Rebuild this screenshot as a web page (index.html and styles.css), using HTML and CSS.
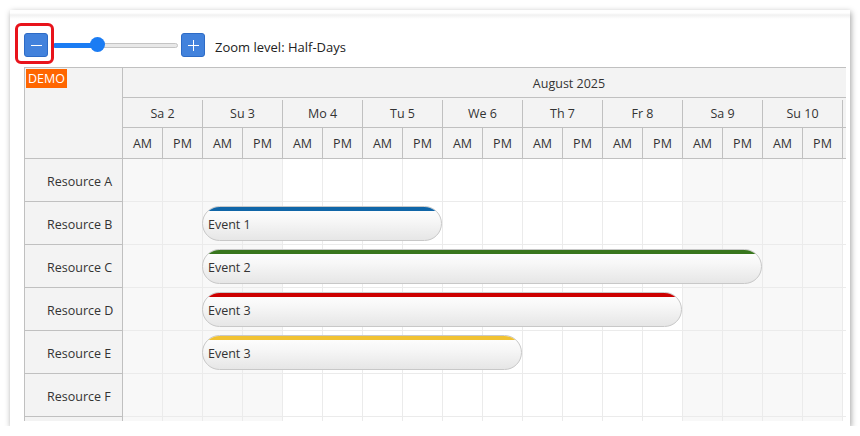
FILE: index.html
```html
<!DOCTYPE html>
<html>
<head>
<meta charset="utf-8">
<link rel="stylesheet" href="styles.css">
</head>
<body>
<div class="frame">
  <div class="toolbar">
    <button class="zbtn"><span class="minus"></span></button>
    <div class="slider"><div class="fill"></div><div class="thumb"></div></div>
    <button class="zbtn"><span class="plus"></span></button>
    <span class="zlabel">Zoom level: Half-Days</span>
  </div>
  <div class="highlight"></div>
  <div class="scheduler">
    <div class="head">
      <div class="corner"><span class="demo">DEMO</span></div>
      <div class="timehead">
        <div class="hrow month"><div class="hc m">August 2025</div></div>
        <div class="hrow days">
          <div class="hc d">Sa 2</div><div class="hc d">Su 3</div><div class="hc d">Mo 4</div><div class="hc d">Tu 5</div><div class="hc d">We 6</div><div class="hc d">Th 7</div><div class="hc d">Fr 8</div><div class="hc d">Sa 9</div><div class="hc d">Su 10</div><div class="hc d"></div>
        </div>
        <div class="hrow halves">
          <div class="hc h">AM</div><div class="hc h">PM</div><div class="hc h">AM</div><div class="hc h">PM</div><div class="hc h">AM</div><div class="hc h">PM</div><div class="hc h">AM</div><div class="hc h">PM</div><div class="hc h">AM</div><div class="hc h">PM</div><div class="hc h">AM</div><div class="hc h">PM</div><div class="hc h">AM</div><div class="hc h">PM</div><div class="hc h">AM</div><div class="hc h">PM</div><div class="hc h">AM</div><div class="hc h">PM</div><div class="hc h"></div><div class="hc h"></div>
        </div>
      </div>
    </div>

    <div class="row">
      <div class="rh">Resource A</div>
      <div class="lane">
        <div class="c w"></div><div class="c w"></div><div class="c w"></div><div class="c w"></div><div class="c"></div><div class="c"></div><div class="c"></div><div class="c"></div><div class="c"></div><div class="c"></div><div class="c"></div><div class="c"></div><div class="c"></div><div class="c"></div><div class="c w"></div><div class="c w"></div><div class="c w"></div><div class="c w"></div><div class="c"></div><div class="c"></div>
      </div>
    </div>
    <div class="row">
      <div class="rh">Resource B</div>
      <div class="lane">
        <div class="c w"></div><div class="c w"></div><div class="c w"></div><div class="c w"></div><div class="c"></div><div class="c"></div><div class="c"></div><div class="c"></div><div class="c"></div><div class="c"></div><div class="c"></div><div class="c"></div><div class="c"></div><div class="c"></div><div class="c w"></div><div class="c w"></div><div class="c w"></div><div class="c w"></div><div class="c"></div><div class="c"></div>
        <div class="ev blue" style="left:79px;width:240px"><span class="evt">Event 1</span></div>
      </div>
    </div>
    <div class="row">
      <div class="rh">Resource C</div>
      <div class="lane">
        <div class="c w"></div><div class="c w"></div><div class="c w"></div><div class="c w"></div><div class="c"></div><div class="c"></div><div class="c"></div><div class="c"></div><div class="c"></div><div class="c"></div><div class="c"></div><div class="c"></div><div class="c"></div><div class="c"></div><div class="c w"></div><div class="c w"></div><div class="c w"></div><div class="c w"></div><div class="c"></div><div class="c"></div>
        <div class="ev green" style="left:79px;width:560px"><span class="evt">Event 2</span></div>
      </div>
    </div>
    <div class="row">
      <div class="rh">Resource D</div>
      <div class="lane">
        <div class="c w"></div><div class="c w"></div><div class="c w"></div><div class="c w"></div><div class="c"></div><div class="c"></div><div class="c"></div><div class="c"></div><div class="c"></div><div class="c"></div><div class="c"></div><div class="c"></div><div class="c"></div><div class="c"></div><div class="c w"></div><div class="c w"></div><div class="c w"></div><div class="c w"></div><div class="c"></div><div class="c"></div>
        <div class="ev red" style="left:79px;width:480px"><span class="evt">Event 3</span></div>
      </div>
    </div>
    <div class="row">
      <div class="rh">Resource E</div>
      <div class="lane">
        <div class="c w"></div><div class="c w"></div><div class="c w"></div><div class="c w"></div><div class="c"></div><div class="c"></div><div class="c"></div><div class="c"></div><div class="c"></div><div class="c"></div><div class="c"></div><div class="c"></div><div class="c"></div><div class="c"></div><div class="c w"></div><div class="c w"></div><div class="c w"></div><div class="c w"></div><div class="c"></div><div class="c"></div>
        <div class="ev yellow" style="left:79px;width:320px"><span class="evt">Event 3</span></div>
      </div>
    </div>
    <div class="row">
      <div class="rh">Resource F</div>
      <div class="lane">
        <div class="c w"></div><div class="c w"></div><div class="c w"></div><div class="c w"></div><div class="c"></div><div class="c"></div><div class="c"></div><div class="c"></div><div class="c"></div><div class="c"></div><div class="c"></div><div class="c"></div><div class="c"></div><div class="c"></div><div class="c w"></div><div class="c w"></div><div class="c w"></div><div class="c w"></div><div class="c"></div><div class="c"></div>
      </div>
    </div>
    <div class="row">
      <div class="rh"></div>
      <div class="lane">
        <div class="c w"></div><div class="c w"></div><div class="c w"></div><div class="c w"></div><div class="c"></div><div class="c"></div><div class="c"></div><div class="c"></div><div class="c"></div><div class="c"></div><div class="c"></div><div class="c"></div><div class="c"></div><div class="c"></div><div class="c w"></div><div class="c w"></div><div class="c w"></div><div class="c w"></div><div class="c"></div><div class="c"></div>
      </div>
    </div>
  </div>
</div>
</body>
</html>
```
FILE: styles.css
```css
html, body {
  margin: 0;
  padding: 0;
  background: #ffffff;
}
body {
  font-family: "Open Sans", "Liberation Sans", sans-serif;
  font-size: 12.5px;
  color: #333333;
}
.frame {
  position: relative;
  margin: 10px 0 0 10px;
  width: 840px;
  height: 416px;
  box-sizing: border-box;
  padding: 23px 0 0 14px;
  background: linear-gradient(to bottom, #ffffff 0, #ffffff 3px, #f1f1f1 5px, #ffffff 9px);
  box-shadow: 1px 2px 6px rgba(0, 0, 0, 0.38);
  overflow: hidden;
}
.toolbar {
  display: flex;
  align-items: center;
  height: 24px;
  margin-bottom: 10px;
}
.zbtn {
  width: 24px;
  height: 24px;
  margin: 0;
  padding: 0;
  border: 1px solid #2d6bc6;
  border-radius: 3px;
  background: #4282dc;
  display: flex;
  align-items: center;
  justify-content: center;
  position: relative;
}
.minus, .plus {
  display: block;
  width: 11px;
  height: 11px;
  position: relative;
}
.minus::before, .plus::before, .plus::after {
  content: "";
  position: absolute;
  background: #ffffff;
}
.minus::before, .plus::before {
  left: 0;
  top: 5px;
  width: 11px;
  height: 1.5px;
}
.plus::after {
  left: 5px;
  top: 0;
  width: 1.5px;
  height: 11px;
}
.slider {
  position: relative;
  width: 125px;
  height: 5px;
  margin: 0 3px 0 5px;
  box-sizing: border-box;
  border: 1px solid #c4c4c4;
  border-radius: 3px;
  background: #e8e8e8;
}
.fill {
  position: absolute;
  left: -1px;
  top: -1px;
  width: 44px;
  height: 5px;
  border-radius: 3px 0 0 3px;
  background: #1b7cf3;
}
.thumb {
  position: absolute;
  left: 36px;
  top: -7px;
  width: 15px;
  height: 15px;
  border-radius: 50%;
  background: #1b7cf3;
}
.zlabel {
  margin-left: 10px;
  font-size: 13px;
  color: #222222;
  padding-top: 4px;
}
.highlight {
  position: absolute;
  left: 5px;
  top: 13px;
  width: 39px;
  height: 41px;
  box-sizing: border-box;
  border: 3px solid #e8131b;
  border-radius: 6px;
}
.scheduler {
  width: 822px;
  height: 354px;
  box-sizing: border-box;
  border-left: 1px solid #c0c0c0;
  border-top: 1px solid #c0c0c0;
  overflow: hidden;
}
.head {
  display: flex;
}
.corner {
  flex: 0 0 98px;
  height: 91px;
  box-sizing: border-box;
  border-right: 1px solid #c0c0c0;
  border-bottom: 1px solid #c0c0c0;
  background: #f3f3f3;
  padding: 1px 0 0 1px;
}
.demo {
  display: inline-block;
  background: #ff6600;
  color: #ffffff;
  font-size: 12.5px;
  line-height: 19px;
  padding: 0 2px;
}
.timehead {
  background: #f3f3f3;
  width: 1000px;
}
.hrow {
  display: flex;
  box-sizing: border-box;
  border-bottom: 1px solid #c0c0c0;
}
.month { height: 30px; padding-top: 1px; }
.days { height: 30px; padding-top: 2px; }
.halves { height: 31px; }
.hc {
  flex: 0 0 auto;
  box-sizing: border-box;
  display: flex;
  align-items: center;
  justify-content: center;
}
.m {
  width: 892px;
}
.d {
  width: 80px;
  border-right: 1px solid #c0c0c0;
}
.h {
  width: 40px;
  border-right: 1px solid #c0c0c0;
}
.row {
  display: flex;
  height: 43px;
}
.rh {
  flex: 0 0 98px;
  box-sizing: border-box;
  border-right: 1px solid #c0c0c0;
  border-bottom: 1px solid #c0c0c0;
  background: #f3f3f3;
  display: flex;
  align-items: center;
  padding-left: 22px;
  padding-top: 3px;
  white-space: nowrap;
}
.lane {
  position: relative;
  display: flex;
  width: 1000px;
}
.c {
  flex: 0 0 40px;
  box-sizing: border-box;
  border-right: 1px solid #ebebeb;
  border-bottom: 1px solid #ebebeb;
  background: #ffffff;
}
.c.w {
  background: #f8f8f8;
}
.ev {
  position: absolute;
  top: 4px;
  height: 35px;
  box-sizing: border-box;
  border: 1px solid #c8c8c8;
  border-radius: 18px;
  background: linear-gradient(to bottom, #ffffff 0%, #f7f7f7 40%, #e6e6e6 100%);
  overflow: hidden;
  padding: 4px 0 0 5px;
}
.ev::before {
  content: "";
  position: absolute;
  left: 0;
  right: 0;
  top: 0;
  height: 4px;
}
.ev.blue::before { background: #1066a8; }
.ev.green::before { background: #38761d; }
.ev.red::before { background: #cc0000; }
.ev.yellow::before { background: #f1c232; }
.evt {
  display: block;
  line-height: 28px;
  color: #333333;
}
```
